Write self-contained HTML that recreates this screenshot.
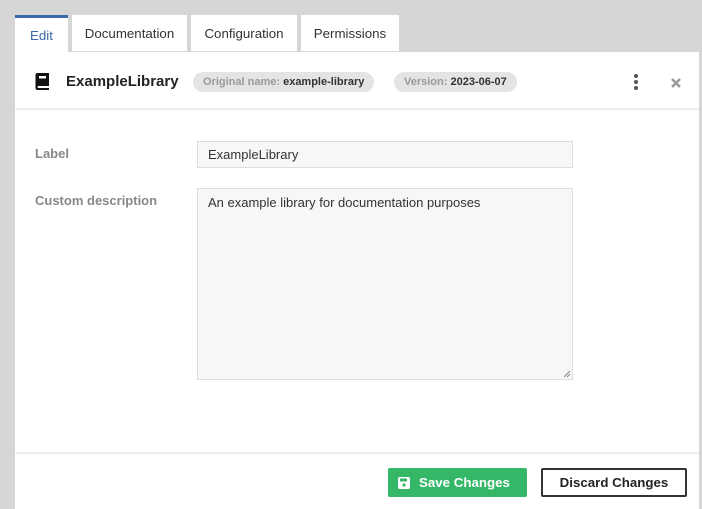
<!DOCTYPE html>
<html><head><style>
*{box-sizing:border-box;margin:0;padding:0}
body{width:702px;height:509px;background:#d6d6d6;font-family:"Liberation Sans",sans-serif;position:relative;overflow:hidden}
.tab{position:absolute;top:15px;height:37px;background:#fff;font-size:13.3px;color:#333;text-align:center;line-height:38px;border-bottom:1px solid #ddd}
.panel{position:absolute;left:15px;top:52px;width:684px;height:457px;background:#fff}
.pill{position:absolute;top:72px;height:20px;border-radius:10px;background:#e4e4e4;font-size:11px;font-weight:bold;color:#999;line-height:20px;padding:0 10px}
.pill b{color:#333}
.lbl{position:absolute;left:35px;font-size:13px;font-weight:bold;color:#888}
.in{position:absolute;left:197px;width:376px;background:#f7f7f7;border:1px solid #ddd;font-size:13px;color:#333;padding:0 10px}
</style></head><body>
<div class="tab" style="left:15px;width:53px;border-top:3px solid #3a6aa8;color:#3a6aa8;border-bottom:none;height:38px;line-height:35px">Edit</div>
<div class="tab" style="left:72px;width:115px">Documentation</div>
<div class="tab" style="left:191px;width:106px">Configuration</div>
<div class="tab" style="left:301px;width:98px">Permissions</div>
<div class="panel"></div>
<div style="position:absolute;left:15px;top:108px;width:684px;height:2px;background:#eee"></div>
<svg style="position:absolute;left:35px;top:73px" width="15" height="17" viewBox="0 0 15 17"><path d="M2.5 0H14V13H3.5A1 1 0 0 0 3.5 15H14V17H2.5A2 2 0 0 1 0.5 15V2A2 2 0 0 1 2.5 0Z" fill="#111"/><rect x="4" y="3" width="7" height="2.5" fill="#fff"/></svg>
<div style="position:absolute;left:66px;top:73px;font-size:15px;font-weight:bold;color:#222">ExampleLibrary</div>
<div class="pill" style="left:193px">Original name: <b>example-library</b></div>
<div class="pill" style="left:394px">Version: <b>2023-06-07</b></div>
<svg style="position:absolute;left:632px;top:73px" width="8" height="18"><circle cx="4" cy="3" r="2" fill="#555"/><circle cx="4" cy="9" r="2" fill="#555"/><circle cx="4" cy="15" r="2" fill="#555"/></svg>
<svg style="position:absolute;left:670px;top:77px" width="12" height="12"><path d="M2 2L10 10M10 2L2 10" stroke="#999" stroke-width="2.4"/></svg>
<div class="lbl" style="top:146px">Label</div>
<div class="in" style="top:141px;height:27px;line-height:26px">ExampleLibrary</div>
<div class="lbl" style="top:193px">Custom description</div>
<div class="in" style="top:188px;height:192px;padding-top:6px">An example library for documentation purposes</div>
<svg style="position:absolute;left:563px;top:370px" width="8" height="8"><path d="M1 7L7 1M4 7L7 4" stroke="#888" stroke-width="1"/></svg>
<div style="position:absolute;left:15px;top:452px;width:684px;height:2px;background:#eee"></div>
<div style="position:absolute;left:388px;top:468px;width:139px;height:29px;background:#34b767;border-radius:2px;color:#fff;font-size:13.3px;font-weight:bold;line-height:29px;padding-left:31px">Save Changes</div>
<svg style="position:absolute;left:398px;top:477px" width="12" height="12"><rect width="12" height="12" rx="2" fill="#fff"/><rect x="2" y="1.5" width="7" height="3" fill="#34b767"/><circle cx="6" cy="8" r="1.6" fill="#34b767"/></svg>
<div style="position:absolute;left:541px;top:468px;width:146px;height:29px;border:2px solid #333;border-radius:2px;color:#222;font-size:13.3px;font-weight:bold;line-height:25px;text-align:center">Discard Changes</div>
</body></html>
